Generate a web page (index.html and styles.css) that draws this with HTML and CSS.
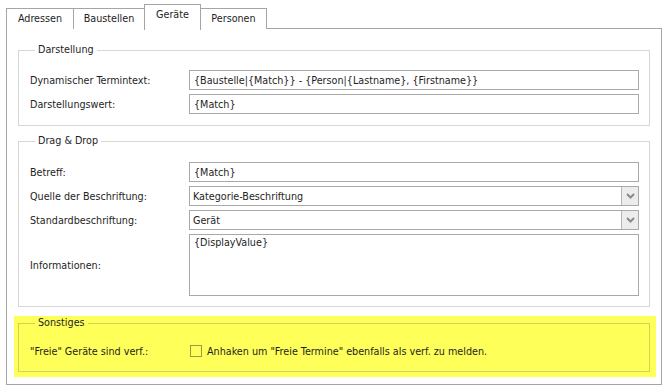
FILE: index.html
```html
<!DOCTYPE html>
<html lang="de">
<head>
<meta charset="utf-8">
<title>Geräte</title>
<link rel="stylesheet" href="styles.css">
</head>
<body>
<div class="window">
  <div class="tabs">
    <div class="tab tab-adressen">Adressen</div>
    <div class="tab tab-baustellen">Baustellen</div>
    <div class="tab tab-geraete active">Geräte</div>
    <div class="tab tab-personen">Personen</div>
  </div>
  <div class="panel">
    <div class="section">
      <fieldset class="group group-first">
        <legend>Darstellung</legend>
        <div class="rows">
          <div class="row">
            <label class="lbl">Dynamischer Termintext:</label>
            <div class="field">{Baustelle|{Match}} - {Person|{Lastname}, {Firstname}}</div>
          </div>
          <div class="row">
            <label class="lbl">Darstellungswert:</label>
            <div class="field">{Match}</div>
          </div>
        </div>
      </fieldset>
    </div>
    <div class="section">
      <fieldset class="group group-second">
        <legend>Drag &amp; Drop</legend>
        <div class="rows">
          <div class="row">
            <label class="lbl">Betreff:</label>
            <div class="field">{Match}</div>
          </div>
          <div class="row">
            <label class="lbl">Quelle der Beschriftung:</label>
            <div class="field combo"><span class="combo-text">Kategorie-Beschriftung</span><span class="combo-btn"><svg width="9" height="6" viewBox="0 0 9 6"><path d="M1 1 L4.5 4.5 L8 1" fill="none" stroke="#8a8a8a" stroke-width="2"/></svg></span></div>
          </div>
          <div class="row">
            <label class="lbl">Standardbeschriftung:</label>
            <div class="field combo"><span class="combo-text">Gerät</span><span class="combo-btn"><svg width="9" height="6" viewBox="0 0 9 6"><path d="M1 1 L4.5 4.5 L8 1" fill="none" stroke="#8a8a8a" stroke-width="2"/></svg></span></div>
          </div>
          <div class="row">
            <label class="lbl">Informationen:</label>
            <div class="field memo">{DisplayValue}</div>
          </div>
        </div>
      </fieldset>
    </div>
    <div class="section highlight">
      <fieldset class="group group-yellow">
        <legend>Sonstiges</legend>
        <div class="rows">
          <div class="row row-check">
            <label class="lbl">"Freie" Geräte sind verf.:</label>
            <div class="check"><span class="box"></span><span>Anhaken um "Freie Termine" ebenfalls als verf. zu melden.</span></div>
          </div>
        </div>
      </fieldset>
    </div>
  </div>
</div>
</body>
</html>
```

FILE: styles.css
```css
* { box-sizing: border-box; }
html, body { margin: 0; padding: 0; background: #fff; }
body {
  font-family: "DejaVu Sans Condensed", "DejaVu Sans", sans-serif;
  font-size: 10.7px;
  color: #1e1e1e;
}
.window {
  width: 668px;
  height: 389px;
  padding: 4px 6px 0 6px;
}
.tabs {
  display: flex;
  align-items: flex-end;
  height: 25px;
  position: relative;
  z-index: 2;
}
.tab {
  height: 21px;
  border: 1px solid #a5a5a5;
  border-bottom: none;
  background: #fff;
  display: flex;
  align-items: center;
  justify-content: center;
  padding-bottom: 1px;
  margin-left: -1px;
}
.tab-adressen { width: 68px; margin-left: 0; }
.tab-baustellen { width: 72px; }
.tab-geraete { width: 57px; }
.tab-personen { width: 67px; }
.tab.active {
  height: 26px;
  margin-bottom: -1px;
  padding-bottom: 6px;
}
.panel {
  border: 1px solid #a5a5a5;
  height: 357px;
  margin-top: -1px;
  padding: 14px 5px 0 7px;
}
.section {
  padding: 0 6px 0 4px;
}
.section + .section { margin-top: 8px; }
.section.highlight {
  background: #ffff59;
  margin-top: 9px;
  padding-bottom: 5px;
}
.group {
  margin: 0;
  border: 1px solid #d6d6d6;
  padding: 13px 10px 11px 11px;
  min-width: 0;
}
.group legend {
  margin-left: 5px;
  padding: 0 3px;
  line-height: 14px;
}
.group-second { padding-top: 14px; padding-bottom: 10px; }
.group-yellow { border-color: #d2d25a; padding-top: 11px; padding-bottom: 10px; }
.rows {
  display: flex;
  flex-direction: column;
  gap: 4px;
}
.row {
  display: grid;
  grid-template-columns: 159px 1fr;
  align-items: center;
}
.lbl { white-space: nowrap; }
.field {
  height: 20px;
  border: 1px solid #a9a9a9;
  background: #fff;
  padding: 0 4px;
  display: flex;
  align-items: center;
  white-space: nowrap;
  overflow: hidden;
}
.combo { padding: 0 0 0 3px; }
.combo-text { flex: 1; }
.combo-btn {
  width: 17px;
  height: 100%;
  border-left: 1px solid #b5b5b5;
  background: #ececec;
  display: flex;
  align-items: center;
  justify-content: center;
}
.memo {
  height: 62px;
  align-items: flex-start;
  padding-top: 1px;
}
.row-check { min-height: 20px; }
.check {
  display: flex;
  align-items: center;
  gap: 5px;
  padding-left: 1px;
}
.box {
  width: 12px;
  height: 12px;
  border: 1px solid #9a9a4a;
}
```
